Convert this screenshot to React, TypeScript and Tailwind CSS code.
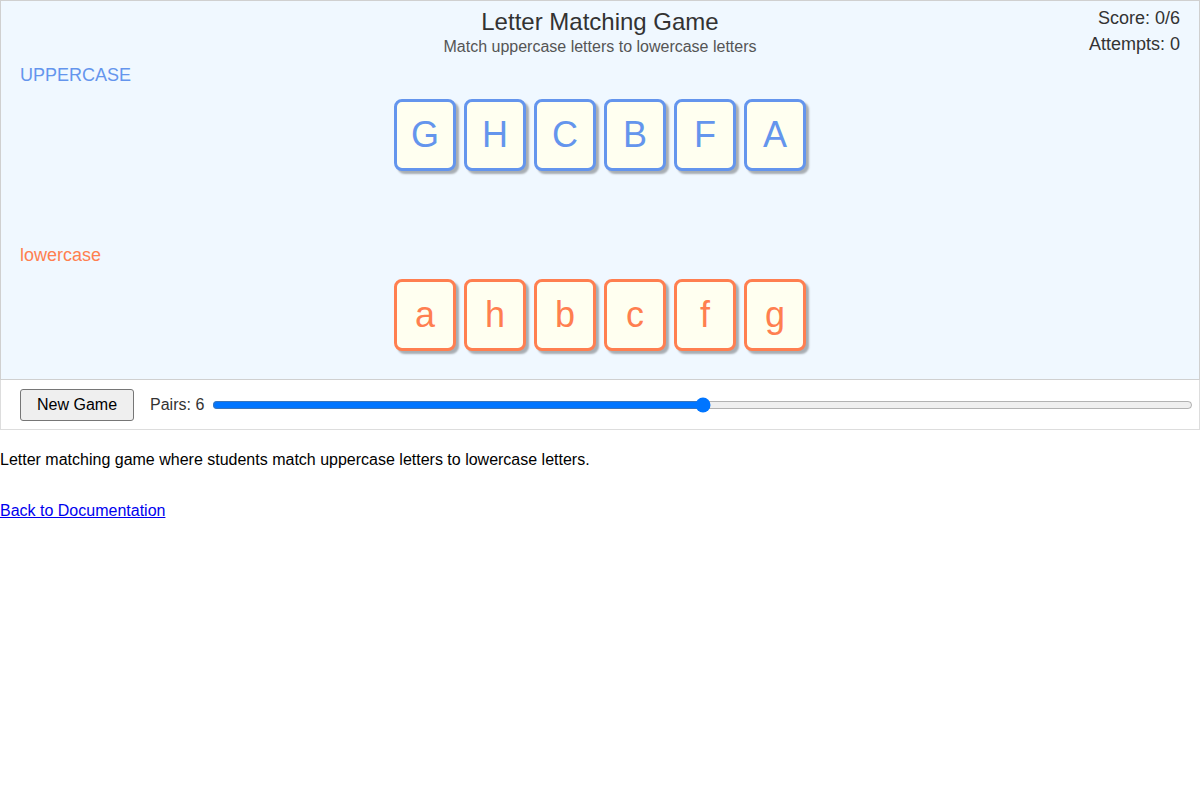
import { useState } from "react";

const UPPER = ["G", "H", "C", "B", "F", "A"];
const LOWER = ["a", "h", "b", "c", "f", "g"];

function Tile({ ch, tone }: { ch: string; tone: "upper" | "lower" }) {
  const ring =
    tone === "upper"
      ? "border-[#6495ed] text-[#6495ed]"
      : "border-[#ff7f50] text-[#ff7f50]";
  return (
    <div
      className={`flex h-[72px] w-[62px] items-center justify-center rounded-[8px] border-[3px] bg-[#fffff0] text-[36px] leading-none shadow-[3px_3px_2px_rgba(0,0,0,0.3)] ${ring}`}
    >
      {ch}
    </div>
  );
}

function TileRow({ letters, tone }: { letters: string[]; tone: "upper" | "lower" }) {
  return (
    <div className="flex justify-center gap-[8px]">
      {letters.map((ch) => (
        <Tile key={ch} ch={ch} tone={tone} />
      ))}
    </div>
  );
}

export default function App() {
  const [pairs, setPairs] = useState(6);

  return (
    <div className="font-['Liberation_Sans',Arial,sans-serif] text-black">
      <div className="h-[380px] border border-[#d0d0d0] bg-[#f0f8ff]">
        <div className="grid h-[63px] grid-cols-[1fr_auto_1fr]">
          <div />
          <div className="pt-[7px] text-center">
            <div className="text-[24px] leading-[28px] text-[#333]">Letter Matching Game</div>
            <div className="mt-px text-[16px] leading-[20px] text-[#555]">
              Match uppercase letters to lowercase letters
            </div>
          </div>
          <div className="pr-[19px] pt-[4px] text-right text-[18px] leading-[26px] text-[#333]">
            <div>Score: 0/{pairs}</div>
            <div>Attempts: 0</div>
          </div>
        </div>

        <div className="pl-[19px] text-[18px] leading-[22px] text-[#6495ed]">UPPERCASE</div>
        <div className="mt-[13px]">
          <TileRow letters={UPPER} tone="upper" />
        </div>

        <div className="mt-[73px] pl-[19px] text-[18px] leading-[22px] text-[#ff7f50]">lowercase</div>
        <div className="mt-[13px]">
          <TileRow letters={LOWER} tone="lower" />
        </div>
      </div>

      <div className="flex h-[50px] items-center border border-t-0 border-[#ddd] bg-white pl-[19px] pr-[6px]">
        <button className="h-[32px] rounded-[3px] border border-[#767676] bg-[#efefef] px-[16px] text-[16px] text-black">
          New Game
        </button>
        <span className="ml-[16px] text-[16px] text-[#333]">Pairs: {pairs}</span>
        <input
          type="range"
          min={2}
          max={10}
          value={pairs}
          onChange={(e) => setPairs(Number(e.target.value))}
          className="ml-[8px] flex-1"
        />
      </div>

      <p className="mt-[21px] text-[16px] leading-[18px]">
        Letter matching game where students match uppercase letters to lowercase letters.
      </p>
      <p className="mt-[33px] text-[16px] leading-[18px]">
        <a href="#" className="text-[#0000ee] underline">
          Back to Documentation
        </a>
      </p>
    </div>
  );
}
